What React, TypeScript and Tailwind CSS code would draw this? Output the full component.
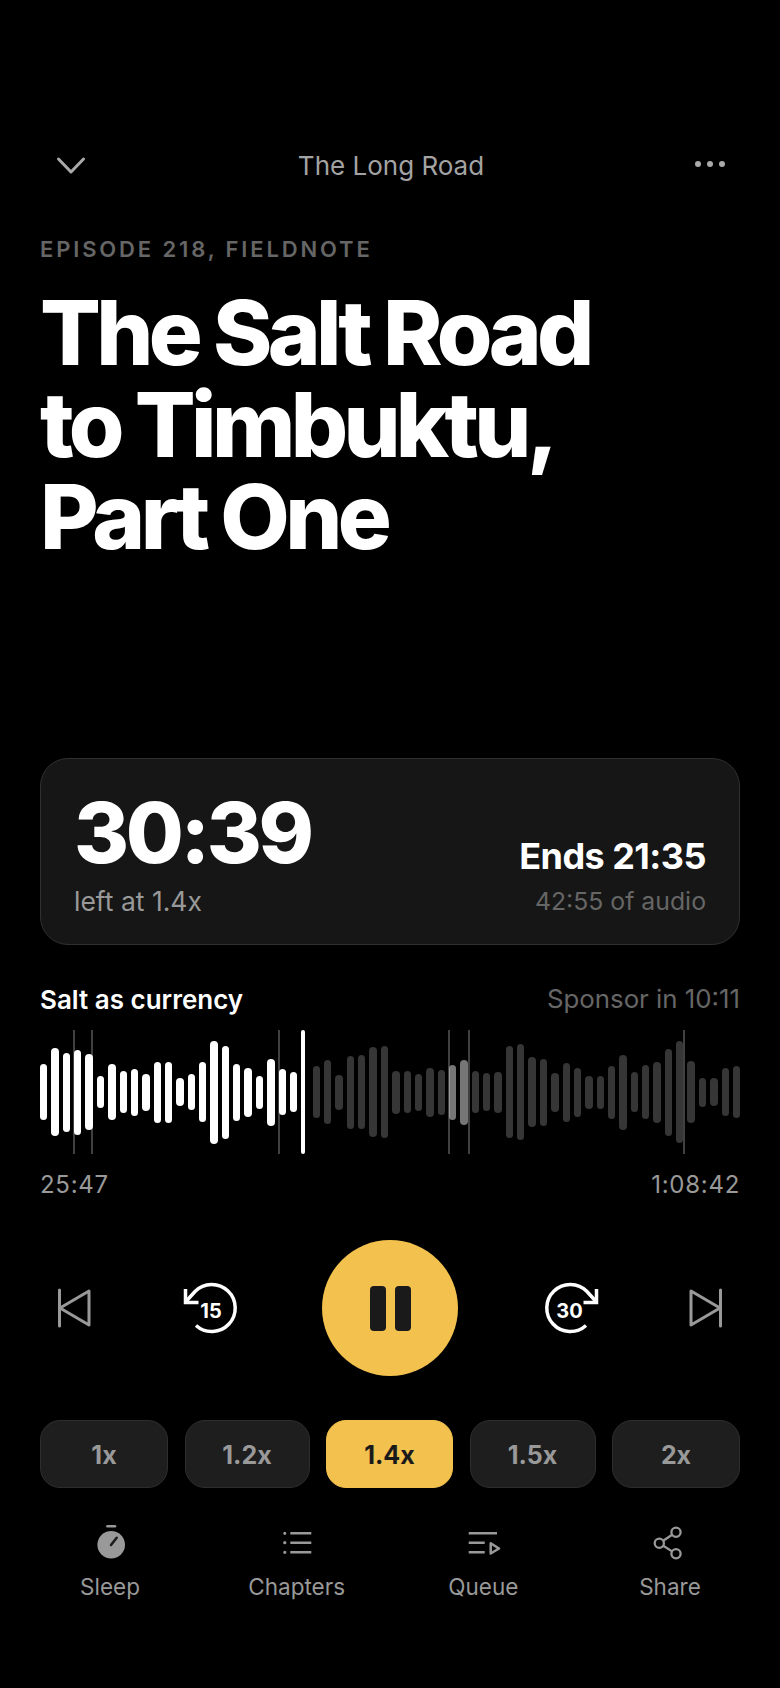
// bar heights in px, one per slot; 0 = slot hidden behind the playhead
const bars = [
  56, 88, 79, 85, 76, 32, 56, 42, 47, 37, 61, 61, 28, 36, 60, 103, 93, 57, 49, 33, 67, 46, 40, 0,
  52, 64, 35, 73, 74, 90, 92, 43, 42, 37, 49, 45, 55, 65, 42, 38, 41, 92, 96, 70, 67, 39, 59, 49,
  33, 33, 53, 75, 40, 54, 61, 87, 102, 62, 29, 28, 48, 52,
];
const markers = ["left-[33px]", "left-[51px]", "left-[238px]", "left-[408px]", "left-[428px]", "left-[643px]"];
const speeds = [
  { label: "1x", width: "w-[128px]" },
  { label: "1.2x", width: "w-[125px]" },
  { label: "1.4x", width: "w-[127px]", active: true },
  { label: "1.5x", width: "w-[126px]" },
  { label: "2x", width: "w-[128px]" },
];

function barColor(i: number) {
  if (i < 23) return "bg-white";
  if (i === 36 || i === 37) return "bg-[#767676]";
  return "bg-[#363636]";
}

function SkipIcon({ flip }: { flip?: boolean }) {
  return (
    <svg width="36" height="42" viewBox="0 0 36 42" fill="none" stroke="#999" strokeWidth="3" strokeLinejoin="round" strokeLinecap="round" className={flip ? "-scale-x-100" : ""}>
      <path d="M3.5 3v36" />
      <path d="M33 4 4 21l29 17z" />
    </svg>
  );
}

function JumpIcon({ label, forward }: { label: string; forward?: boolean }) {
  return (
    <div className={`relative w-[60px] h-[60px] flex justify-center ${forward ? "pr-[3px]" : ""}`}>
      <svg width="60" height="60" viewBox="0 0 60 60" fill="none" stroke="#fff" strokeWidth="3.5" className={`absolute inset-0 ${forward ? "-scale-x-100" : ""}`}>
        <path d="M15 47.5A23.5 23.5 0 1 0 14 13.5L4.5 24" />
        <path d="M4.5 11v13.5h13" />
      </svg>
      <span className="relative mt-[21px] text-[20px] leading-[24px] font-bold text-white">{label}</span>
    </div>
  );
}

export default function App() {
  return (
    <div className="w-[780px] h-[1688px] bg-black px-10 font-['Inter',sans-serif] overflow-hidden">
      <header className="flex items-center justify-between h-[40px] mt-[145px]">
        <svg width="32" height="20" viewBox="0 0 32 20" fill="none" stroke="#aaa" strokeWidth="3" strokeLinecap="round" strokeLinejoin="round" className="ml-[15px]">
          <path d="M3.5 4 16 17 28.5 4" />
        </svg>
        <span className="text-[26px] text-[#a3a3a3]">The Long Road</span>
        <div className="flex gap-[6px] mr-[15px] mb-[3px]">
          <span className="w-[6px] h-[6px] rounded-full bg-[#aaa]" />
          <span className="w-[6px] h-[6px] rounded-full bg-[#aaa]" />
          <span className="w-[6px] h-[6px] rounded-full bg-[#aaa]" />
        </div>
      </header>

      <p className="mt-[51px] text-[22px] leading-[26px] font-semibold tracking-[0.13em] text-[#666]">EPISODE 218, FIELDNOTE</p>
      <h1 className="mt-[25px] text-[90px] leading-[92px] font-extrabold tracking-[-0.052em] text-white">
        The Salt Road
        <br />
        to Timbuktu,
        <br />
        Part One
      </h1>

      <section className="mt-[195px] h-[187px] rounded-[28px] bg-[#161616] border border-[#303030] px-[33px] flex justify-between items-end pb-[28px]">
        <div>
          <div className="text-[84px] leading-[84px] font-extrabold tracking-[-0.04em] text-white">30:39</div>
          <div className="text-[26.5px] leading-[30px] text-[#999] mt-[11px]">left at 1.4x</div>
        </div>
        <div className="text-right">
          <div className="text-[36px] leading-[44px] font-bold tracking-[-0.015em] text-white">Ends 21:35</div>
          <div className="text-[24.8px] leading-[30px] text-[#666] mt-[8px]">42:55 of audio</div>
        </div>
      </section>

      <div className="mt-[38px] flex justify-between items-center h-[32px]">
        <span className="text-[26px] font-semibold text-white">Salt as currency</span>
        <span className="text-[25.8px] text-[#666]">Sponsor in 10:11</span>
      </div>

      <div className="relative mt-[15px] h-[124px] flex items-center gap-1">
        {bars.map((h, i) => (
          <div key={i} className={`flex-1 rounded-full ${barColor(i)}`} style={{ height: h }} />
        ))}
        {markers.map((m) => (
          <div key={m} className={`absolute top-0 bottom-0 w-[2px] bg-white/25 ${m}`} />
        ))}
        <div className="absolute top-0 bottom-0 left-[261px] w-[4px] rounded-full bg-white" />
      </div>

      <div className="mt-[16px] flex justify-between text-[24px] leading-[30px] tracking-[0.03em] text-[#999]">
        <span>25:47</span>
        <span>1:08:42</span>
      </div>

      <div className="mt-[40px] h-[136px] flex items-center justify-between">
        <div className="w-[282px] pl-4 pr-[81px] flex items-center justify-between">
          <SkipIcon />
          <JumpIcon label="15" />
        </div>
        <button className="w-[136px] h-[136px] rounded-full bg-[#f2c14e] flex items-center justify-center gap-[9px]">
          <span className="w-[16px] h-[45px] rounded-[4px] bg-[#1a1a1a]" />
          <span className="w-[16px] h-[45px] rounded-[4px] bg-[#1a1a1a]" />
        </button>
        <div className="w-[282px] pl-[83px] pr-4 flex items-center justify-between">
          <JumpIcon label="30" forward />
          <SkipIcon flip />
        </div>
      </div>

      <div className="mt-[44px] flex justify-between">
        {speeds.map((s) => (
          <button
            key={s.label}
            className={`${s.width} h-[68px] pt-[3px] rounded-[20px] border text-[25px] font-bold ${
              s.active ? "bg-[#f2c14e] border-[#f2c14e] text-[#1a1a1a]" : "bg-[#1e1e1e] border-[#2e2e2e] text-[#999]"
            }`}
          >
            {s.label}
          </button>
        ))}
      </div>

      <div className="mt-[32px] flex justify-between text-[22.5px] leading-[28px] text-[#999]">
        <div className="w-[140px] flex flex-col items-center">
          <svg width="40" height="40" viewBox="0 0 40 40">
            <path d="M17.5 6.3H25" stroke="#999" strokeWidth="2.6" strokeLinecap="round" />
            <circle cx="21.2" cy="24.7" r="13.8" fill="#999" />
            <path d="M21 25l5.7-7.3" stroke="#1c1c1c" strokeWidth="2.5" strokeLinecap="round" />
          </svg>
          <span className="mt-[13px]">Sleep</span>
        </div>
        <div className="w-[140px] flex flex-col items-center">
          <svg width="40" height="40" viewBox="0 0 40 40" fill="none" stroke="#999" strokeWidth="2.5">
            <path d="M13.3 13.3h21M13.3 22.7h21M13.3 32.3h21" />
            <path d="M7.8 13.3h.01M7.8 22.7h.01M7.8 32.3h.01" strokeWidth="3.2" strokeLinecap="round" />
          </svg>
          <span className="mt-[13px]">Chapters</span>
        </div>
        <div className="w-[140px] flex flex-col items-center">
          <svg width="40" height="40" viewBox="0 0 40 40" fill="none" stroke="#999" strokeWidth="2.5">
            <path d="M5.7 13.3H34M5.7 22.7h16M5.7 32.3h16" />
            <path d="M27.7 23.3l8.3 5.2-8.3 5z" strokeLinejoin="round" />
          </svg>
          <span className="mt-[13px]">Queue</span>
        </div>
        <div className="w-[140px] flex flex-col items-center">
          <svg width="40" height="40" viewBox="0 0 40 40" fill="none" stroke="#999" strokeWidth="2.3">
            <circle cx="26" cy="12.3" r="4.6" />
            <circle cx="9.3" cy="23.3" r="4.6" />
            <circle cx="26" cy="33.7" r="4.6" />
            <path d="M13.2 20.8l8.9-6M13.2 25.8l8.9 5.6" />
          </svg>
          <span className="mt-[13px]">Share</span>
        </div>
      </div>
    </div>
  );
}
